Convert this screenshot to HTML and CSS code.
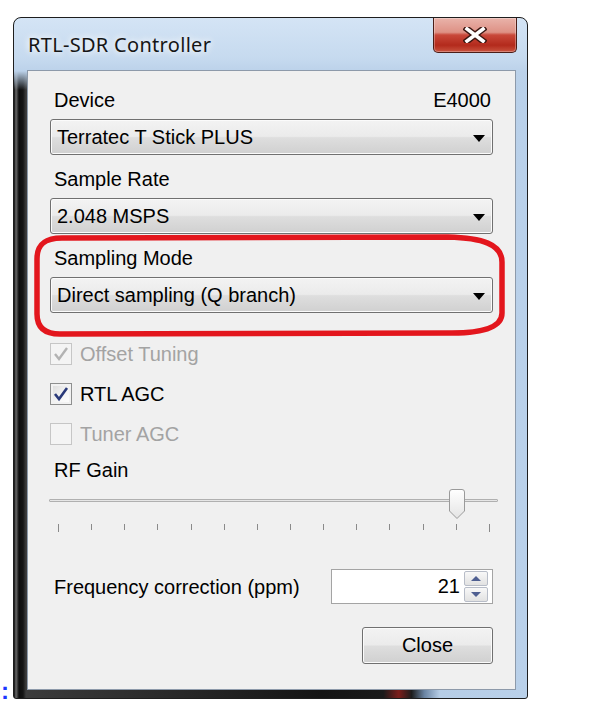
FILE: index.html
```html
<!DOCTYPE html>
<html lang="en">
<head>
    <meta charset="UTF-8">
    <meta name="viewport" content="width=device-width, initial-scale=1.0">
    <title>RTL-SDR Controller</title>
    <link rel="stylesheet" href="styles.css">
</head>
<body>
  <div class="stage">
    <span class="colon">:</span>

    <div class="window">
      <div class="titlebar">
        <span class="title">RTL-SDR Controller</span>
        <div class="close-x">
          <svg width="24" height="16" viewBox="0 0 24 16">
            <path d="M4 2 L20 14 M20 2 L4 14" stroke="#3b1611" stroke-width="6.5" stroke-linecap="square" fill="none"/>
            <path d="M4 2 L20 14 M20 2 L4 14" stroke="#fff" stroke-width="3.6" stroke-linecap="square" fill="none"/>
          </svg>
        </div>
      </div>

      <div class="client">
        <div class="fields">
          <div class="field">
            <div class="label label-row"><span>Device</span><span class="tuner">E4000</span></div>
            <div class="combo">Terratec T Stick PLUS</div>
          </div>
          <div class="field">
            <div class="label">Sample Rate</div>
            <div class="combo">2.048 MSPS</div>
          </div>
          <div class="field">
            <div class="label">Sampling Mode</div>
            <div class="combo">Direct sampling (Q branch)</div>
          </div>
        </div>

        <div class="checks">
          <label class="check disabled">
            <span class="box">
              <svg width="20" height="20" viewBox="0 0 20 20"><path d="M4 10 L8 15 L16 4" stroke="#b3b3b3" stroke-width="2.4" fill="none"/></svg>
            </span>
            Offset Tuning
          </label>
          <label class="check">
            <span class="box">
              <svg width="20" height="20" viewBox="0 0 20 20"><path d="M4 10 L8 15 L16 4" stroke="#2a3a7a" stroke-width="2.6" fill="none"/></svg>
            </span>
            RTL AGC
          </label>
          <label class="check disabled">
            <span class="box"></span>
            Tuner AGC
          </label>
        </div>

        <div class="label rf-label">RF Gain</div>
        <div class="slider">
          <div class="track"></div>
          <div class="thumb-lane">
            <svg class="thumb" style="left: 92.31%" width="18" height="32" viewBox="0 0 18 32">
              <defs>
                <linearGradient id="tg" x1="0" y1="0" x2="0" y2="1">
                  <stop offset="0" stop-color="#ffffff"/>
                  <stop offset="1" stop-color="#e4e4e4"/>
                </linearGradient>
              </defs>
              <path d="M1.5 4 Q1.5 1.5 4 1.5 L14 1.5 Q16.5 1.5 16.5 4 L16.5 23 L9 30.5 L1.5 23 Z" fill="url(#tg)" stroke="#9a9a9a" stroke-width="1"/>
            </svg>
          </div>
          <div class="ticks">
            <i class="long"></i><i></i><i></i><i></i><i></i><i></i><i></i><i></i><i></i><i></i><i></i><i></i><i></i><i class="long"></i>
          </div>
        </div>

        <div class="freq-row">
          <span class="label">Frequency correction (ppm)</span>
          <div class="numeric">
            <span class="value">21</span>
            <div class="spin">
              <span class="up"></span>
              <span class="down"></span>
            </div>
          </div>
        </div>

        <div class="actions">
          <div class="button">Close</div>
        </div>
      </div>
    </div>

    <svg class="marker" width="600" height="703" viewBox="0 0 600 703">
      <path d="M62 238 L448 237 C482 238 502 244 502 262 L502 313 C502 328 482 333 452 333 L60 334 C44 334 37 327 37 314 L37 259 C37 245 44 238 62 238 Z" fill="none" stroke="#e3161d" stroke-width="5.5"/>
    </svg>
  </div>
</body>
</html>
```

FILE: styles.css
```css
body {
  margin: 0;
  background: #fff;
  font-family: "Liberation Sans", Arial, sans-serif;
  color: #000;
}

.stage {
  position: relative;
  height: 703px;
  box-sizing: border-box;
  padding-top: 17px;
  display: flex;
  align-items: flex-start;
}

.colon {
  width: 13px;
  box-sizing: border-box;
  padding-left: 1px;
  align-self: flex-end;
  font: bold 24px/24px "Liberation Sans", Arial, sans-serif;
  color: #1c36ff;
}

/* window frame */
.window {
  width: 515px;
  box-sizing: border-box;
  border: 1px solid #1e1e1e;
  border-radius: 8px 8px 3px 3px;
  padding: 0 11px 8px 13px;
  background:
    linear-gradient(to bottom, #d4e4f5 0, #c6daef 40px, #bcd2ea 53px, rgba(188, 210, 234, 0) 72px) top / 100% 72px no-repeat,
    linear-gradient(90deg, #0a0a0a 0, #6a6a6a 2px, #0d0d0d 5px, #151515 9px, #3c3c3c 12px, #141414 60%, #1a1a1a 72%, #7c1e1b 75%, #1d1d1d 77.5%, #6a84a3 80%, #b6cde6 83%, #bad1ea 100%);
}

.titlebar {
  height: 52px;
  display: flex;
  justify-content: space-between;
  align-items: flex-start;
}

.title {
  font: 20px/24px "Noto Sans", "Open Sans", sans-serif;
  padding: 15px 0 0 1px;
  color: #161616;
  letter-spacing: 0.3px;
  text-shadow: 0 0 6px #fff, 0 0 10px rgba(255, 255, 255, 0.8);
}

.close-x {
  width: 84px;
  height: 35px;
  margin-right: -1px;
  box-sizing: border-box;
  border: 1px solid #4a1d17;
  border-top: 0;
  border-radius: 0 0 5px 5px;
  background: linear-gradient(#e9b3aa 0, #de9185 42%, #c9483a 50%, #b32a1c 80%, #c9533f 100%);
  box-shadow: inset 0 0 0 1px rgba(255, 255, 255, 0.3);
  display: flex;
  align-items: center;
  justify-content: center;
}

/* client area */
.client {
  background: #f0f0f0;
  border: 1px solid #8d9aaa;
  padding: 18px 22px 25px;
  font-size: 20px;
}

.label {
  line-height: 22px;
  padding-left: 4px;
}

.label-row {
  display: flex;
  justify-content: space-between;
}

.tuner {
  padding-right: 2px;
}

.fields {
  display: flex;
  flex-direction: column;
  gap: 13px;
}

.combo {
  position: relative;
  margin-top: 8px;
  height: 36px;
  box-sizing: border-box;
  border: 1px solid #707070;
  border-radius: 3px;
  background: linear-gradient(#f3f3f3 0, #ebebeb 48%, #dedede 52%, #d0d0d0 100%);
  box-shadow: inset 0 0 0 1px #fbfbfb;
  padding-left: 6px;
  line-height: 34px;
}

.combo::after {
  content: "";
  position: absolute;
  right: 7px;
  top: 15px;
  border-left: 6px solid transparent;
  border-right: 6px solid transparent;
  border-top: 7px solid #000;
}

.checks {
  margin-top: 30px;
  display: flex;
  flex-direction: column;
  gap: 18px;
}

.check {
  display: flex;
  align-items: flex-start;
  gap: 8px;
  line-height: 22px;
}

.check .box {
  width: 22px;
  height: 22px;
  box-sizing: border-box;
  border: 1px solid #8e8f8f;
  background: linear-gradient(135deg, #dadada, #f6f6f6 60%, #ffffff);
  box-shadow: inset 0 0 0 2px #f2f2f2;
  display: flex;
  align-items: center;
  justify-content: center;
}

.check.disabled {
  color: #a3a3a3;
}

.check.disabled .box {
  border-color: #c6c6c6;
  background: #f4f4f4;
  box-shadow: none;
}

.rf-label {
  margin-top: 14px;
}

/* slider */
.slider {
  position: relative;
  margin: 5px -5px 0 -1px;
  padding-top: 13px;
}

.track {
  height: 3px;
  box-sizing: border-box;
  border: 1px solid #b0b0b0;
  border-radius: 1px;
  background: #e6e6e6;
}

.thumb-lane {
  position: absolute;
  top: 2px;
  left: 9px;
  right: 8px;
  height: 32px;
}

.thumb {
  position: absolute;
  top: 0;
  margin-left: -9px;
}

.ticks {
  margin-top: 22px;
  padding: 0 8px 0 9px;
  display: flex;
  justify-content: space-between;
}

.ticks i {
  width: 1px;
  height: 6px;
  background: #8a8a8a;
}

.ticks i.long {
  height: 8px;
}

/* frequency correction */
.freq-row {
  margin-top: 37px;
  display: flex;
  justify-content: space-between;
  align-items: center;
}

.numeric {
  width: 162px;
  height: 35px;
  box-sizing: border-box;
  border: 1px solid #a4a4a4;
  background: #fff;
  display: flex;
  align-items: stretch;
}

.numeric .value {
  flex: 1;
  text-align: right;
  padding-right: 4px;
  line-height: 33px;
}

.spin {
  width: 24px;
  margin: 1px 4px 1px 0;
  display: flex;
  flex-direction: column;
  gap: 1px;
}

.spin span {
  flex: 1;
  border: 1px solid #b8bdc8;
  border-radius: 2px;
  background: linear-gradient(#f8f8f8, #e2e2e2);
  display: flex;
  align-items: center;
  justify-content: center;
}

.spin .up::after {
  content: "";
  border-left: 5px solid transparent;
  border-right: 5px solid transparent;
  border-bottom: 5px solid #4f5f91;
}

.spin .down::after {
  content: "";
  border-left: 5px solid transparent;
  border-right: 5px solid transparent;
  border-top: 5px solid #4f5f91;
}

.actions {
  margin-top: 23px;
  display: flex;
  justify-content: flex-end;
}

.button {
  width: 131px;
  height: 37px;
  box-sizing: border-box;
  border: 1px solid #707070;
  border-radius: 3px;
  background: linear-gradient(#f3f3f3 0, #ebebeb 48%, #dedede 52%, #d0d0d0 100%);
  box-shadow: inset 0 0 0 1px #fbfbfb;
  text-align: center;
  line-height: 35px;
}

/* red annotation drawn over the screenshot */
.marker {
  position: absolute;
  top: 0;
  left: 0;
  pointer-events: none;
}
```
